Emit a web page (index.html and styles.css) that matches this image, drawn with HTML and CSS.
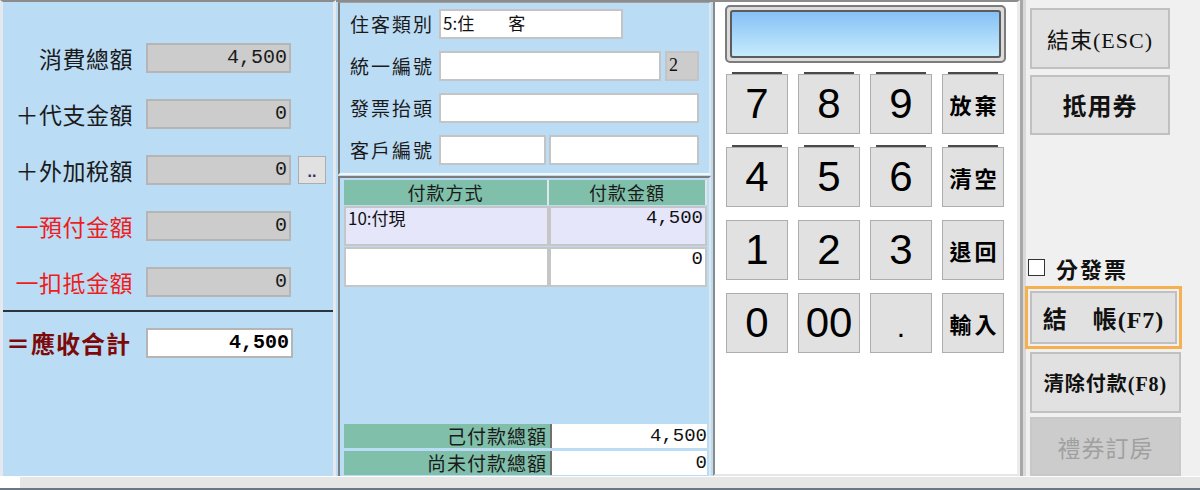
FILE: index.html
```html
<!DOCTYPE html>
<html lang="zh-Hant">
<head>
<meta charset="utf-8">
<title>結帳</title>
<link rel="stylesheet" href="styles.css">
</head>
<body>
<div class="app">
  <div class="main">
    <section class="left">
      <div class="rows">
        <div class="row"><span class="lbl">消費總額</span><span class="fld ro">4,500</span></div>
        <div class="row"><span class="lbl">＋代支金額</span><span class="fld ro">0</span></div>
        <div class="row"><span class="lbl">＋外加稅額</span><span class="fld ro">0</span><span class="dots">..</span></div>
        <div class="row"><span class="lbl neg">一預付金額</span><span class="fld ro">0</span></div>
        <div class="row"><span class="lbl neg">一扣抵金額</span><span class="fld ro">0</span></div>
      </div>
      <div class="divider"></div>
      <div class="row total"><span class="lbl sum">＝應收合計</span><span class="fld sumv">4,500</span></div>
    </section>

    <section class="mid">
      <div class="info">
        <div class="irow"><span class="ilbl">住客類別</span><span class="ifld w-type">5:住　　客</span></div>
        <div class="irow"><span class="ilbl">統一編號</span><span class="ifld w-tax"></span><span class="ifld gray w-chk">2</span></div>
        <div class="irow"><span class="ilbl">發票抬頭</span><span class="ifld w-full"></span></div>
        <div class="irow"><span class="ilbl">客戶編號</span><span class="ifld w-cno"></span><span class="ifld w-cname"></span></div>
      </div>
      <div class="pay">
        <div class="grid">
          <div class="hcell">付款方式</div>
          <div class="hcell">付款金額</div>
          <div class="cell sel">10:付現</div>
          <div class="cell sel num">4,500</div>
          <div class="cell"></div>
          <div class="cell num">0</div>
        </div>
        <div class="totals">
          <div class="trow"><span class="tlbl">己付款總額</span><span class="tval">4,500</span></div>
          <div class="trow"><span class="tlbl">尚未付款總額</span><span class="tval">0</span></div>
        </div>
      </div>
    </section>

    <section class="pad">
      <div class="display"><div class="screen"></div></div>
      <div class="keys">
        <div class="key top">7</div>
        <div class="key top">8</div>
        <div class="key top">9</div>
        <div class="key top txt">放棄</div>
        <div class="key top">4</div>
        <div class="key top">5</div>
        <div class="key top">6</div>
        <div class="key top txt">清空</div>
        <div class="key">1</div>
        <div class="key">2</div>
        <div class="key">3</div>
        <div class="key txt">退回</div>
        <div class="key">0</div>
        <div class="key">00</div>
        <div class="key dot">.</div>
        <div class="key txt">輸入</div>
      </div>
    </section>

    <section class="side">
      <div class="btn b-esc">結束(ESC)</div>
      <div class="btn b-coupon">抵用券</div>
      <label class="chk"><span class="box"></span><span class="chk-t">分發票</span></label>
      <div class="focus"><div class="btn b-pay">結　帳(F7)</div></div>
      <div class="btn b-clear">清除付款(F8)</div>
      <div class="btn b-gift">禮券訂房</div>
    </section>
  </div>
  <div class="hscroll"><div class="hthumb"></div></div>
</div>
</body>
</html>
```

FILE: styles.css
```css
* { box-sizing: border-box; margin: 0; padding: 0; }
html, body { width: 1200px; height: 490px; overflow: hidden; background: #f0f0f0; }
body { font-family: "Noto Sans CJK TC", "Noto Sans CJK SC", sans-serif; color: #111; }

.app { display: flex; flex-direction: column; height: 490px; }
.main { display: flex; height: 476px; }

/* ---------- left summary panel ---------- */
.left {
  width: 336px;
  background: #bbdcf5;
  border-top: 2px solid #8c8c8c;
  border-left: 3px solid #e3e9ef;
  border-right: 3px solid #e3e9ef;
  padding-top: 41px;
  display: flex;
  flex-direction: column;
}
.rows { display: flex; flex-direction: column; gap: 26px; }
.row { display: flex; align-items: center; height: 30px; }
.lbl {
  width: 130px;
  margin-right: 13px;
  text-align: right;
  font-size: 23px;
  letter-spacing: 0.5px;
  line-height: 30px;
  white-space: nowrap;
  color: #1a1a1a;
}
.lbl.neg { color: #ee1c1c; }
.lbl.sum { color: #7d0a0a; font-weight: 700; font-size: 24px; letter-spacing: 1px; padding-right: 2px; }
.fld {
  width: 145px;
  height: 30px;
  border: 2px solid #b5b5b5;
  background: #cccccc;
  font-family: "Liberation Mono", monospace;
  font-size: 20px;
  line-height: 26px;
  text-align: right;
  padding-right: 2px;
  color: #1a1a1a;
}
.fld.sumv { width: 147px; background: #fff; font-weight: 700; color: #000; }
.dots {
  width: 28px;
  height: 28px;
  margin-left: 7px;
  background: #e1e1e1;
  border: 1px solid #adadad;
  font-family: "Liberation Sans", sans-serif;
  font-size: 16px;
  font-weight: 700;
  text-align: center;
  line-height: 30px;
  color: #303060;
}
.divider { margin-top: 13px; height: 2px; background: #2b3540; }
.row.total { margin-top: 16px; }

/* ---------- middle panel ---------- */
.mid {
  width: 377px;
  background: #bbdcf5;
  border-top: 2px solid #8c8c8c;
  padding-left: 2px;
  display: flex;
  flex-direction: column;
}
.info {
  width: 373px;
  height: 173px;
  border-left: 2px solid #7c7c7c;
  border-top: 1px solid #a0a0a0;
  border-right: 2px solid #dfe6ec;
  border-bottom: 2px solid #f4f6f8;
  padding: 6px 0 0 10px;
  display: flex;
  flex-direction: column;
  gap: 12px;
}
.irow { display: flex; align-items: center; height: 30px; }
.ilbl { width: 89px; font-size: 19px; letter-spacing: 2px; line-height: 30px; white-space: nowrap; color: #1a1a1a; }
.ifld {
  height: 30px;
  background: #fff;
  border: 2px solid #c4c4c4;
  font-size: 17px;
  line-height: 24px;
  padding-left: 2px;
  color: #111;
  white-space: nowrap;
}
.ifld.gray { background: #cccccc; font-family: "Liberation Serif", serif; font-size: 18px; margin-left: 4px; }
.w-type { width: 184px; }
.w-tax { width: 222px; }
.w-chk { width: 34px; }
.w-full { width: 260px; }
.w-cno { width: 107px; }
.w-cname { width: 150px; margin-left: 3px; }

.pay {
  flex: 1;
  width: 373px;
  margin-top: 1px;
  border-left: 2px solid #7c7c7c;
  border-top: 2px solid #7c7c7c;
  border-right: 2px solid #dfe6ec;
  padding: 2px 2px 1px 4px;
  display: flex;
  flex-direction: column;
}
.grid {
  display: grid;
  grid-template-columns: 205px 158px;
  grid-template-rows: 25px 40px 40px;
  row-gap: 1px;
}
.hcell {
  background: #80bfa9;
  border-right: 2px solid #dfe6ec;
  text-align: center;
  font-size: 18px;
  letter-spacing: 1px;
  line-height: 25px;
  color: #1a1a1a;
}
.cell {
  background: #fff;
  border: 2px solid #c6c6c6;
  font-size: 17px;
  line-height: 20px;
  padding: 0 2px;
  color: #111;
}
.cell.sel { background: #e6e6fb; }
.cell.num { text-align: right; font-family: "Liberation Mono", monospace; font-size: 19px; }
.totals { margin-top: auto; display: flex; flex-direction: column; gap: 3px; }
.trow { display: flex; height: 24px; }
.tlbl {
  width: 208px;
  background: #80bfa9;
  border-right: 2px solid #707070;
  text-align: right;
  font-size: 19px;
  letter-spacing: 1px;
  line-height: 24px;
  padding-right: 3px;
  color: #1a1a1a;
}
.tval {
  width: 155px;
  background: #fff;
  text-align: right;
  font-family: "Liberation Mono", monospace;
  font-size: 19px;
  line-height: 24px;
  color: #111;
}

/* ---------- keypad ---------- */
.pad {
  width: 307px;
  background: #fff;
  border-top: 2px solid #8c8c8c;
  border-left: 2px solid #8a8a8a;
  border-right: 3px solid #ececec;
  border-bottom: 2px solid #e6e6e6;
  padding: 3px 0 0 10px;
}
.display {
  width: 281px;
  height: 58px;
  border: 2px solid #7c7c7c;
  border-radius: 5px;
  background: #dcdcdc;
  padding: 3px;
}
.screen {
  height: 100%;
  border: 2px solid #5c5c5c;
  border-radius: 3px;
  background: linear-gradient(#86c1f6, #c6ebfc);
}
.keys {
  margin: 11px 0 0 1px;
  display: grid;
  grid-template-columns: repeat(4, 62px);
  grid-auto-rows: 60px;
  column-gap: 10px;
  row-gap: 13px;
}
.key {
  position: relative;
  background: #e1e1e1;
  border: 1px solid #adadad;
  display: flex;
  align-items: center;
  justify-content: center;
  font-family: "Liberation Sans", sans-serif;
  font-size: 42px;
  color: #000;
}
.key.top::before {
  content: "";
  position: absolute;
  left: 5px;
  right: 5px;
  top: -3px;
  height: 2px;
  background: #4a4a4a;
}
.key.txt { font-family: "Noto Sans CJK TC", sans-serif; font-size: 22px; font-weight: 700; letter-spacing: 3px; padding-left: 3px; }
.key.dot { align-items: flex-end; padding-bottom: 10px; font-size: 30px; line-height: 30px; }

/* ---------- right side ---------- */
.side {
  width: 180px;
  background: linear-gradient(to right, #a8a8a8 0 3px, #d9d9d9 3px 6px, #f0f0f0 6px);
  padding: 8px 0 0 5px;
  display: flex;
  flex-direction: column;
}
.btn {
  background: #e1e1e1;
  border: 2px solid #c0c0c0;
  display: flex;
  align-items: center;
  justify-content: center;
  font-family: "Liberation Serif", "Noto Sans CJK TC", serif;
  color: #111;
  white-space: nowrap;
}
.b-esc { width: 140px; height: 61px; margin-left: 5px; font-size: 22px; letter-spacing: 1px; }
.b-coupon { width: 140px; height: 60px; margin: 6px 0 0 5px; font-family: "Noto Sans CJK TC", sans-serif; font-size: 24px; font-weight: 700; letter-spacing: 1px; }
.chk { display: flex; align-items: center; margin: 123px 0 0 3px; height: 20px; }
.box { width: 17px; height: 17px; border: 1px solid #333; background: #fff; }
.chk-t { margin-left: 11px; font-size: 22px; font-weight: 700; letter-spacing: 2px; color: #111; }
.focus {
  width: 157px;
  height: 63px;
  margin-top: 8px;
  border: 3px solid #f4b14d;
  padding: 2px;
}
.b-pay { width: 147px; height: 53px; font-size: 24px; font-weight: 700; letter-spacing: 1px; }
.b-clear { width: 151px; height: 62px; margin: 3px 0 0 5px; font-size: 20px; font-weight: 700; letter-spacing: 1px; }
.b-gift { width: 151px; height: 59px; margin: 4px 0 0 5px; background: #cccccc; border-color: #c8c8c8; font-family: "Noto Sans CJK TC", sans-serif; font-size: 23px; letter-spacing: 1px; color: #a0a0a0; }

/* ---------- bottom strip ---------- */
.hscroll {
  height: 14px;
  background: #e6e6e6;
  border-top: 1px solid #fdfdfd;
  border-bottom: 2px solid #6c7785;
  display: flex;
}
.hthumb { width: 20px; background: #fff; }
```
